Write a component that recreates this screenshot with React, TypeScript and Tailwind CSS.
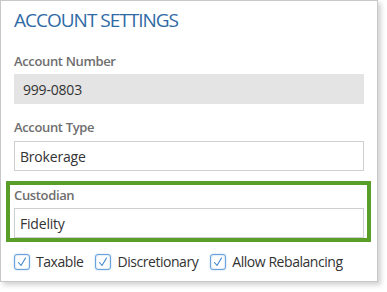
import React from "react";

const font = { fontFamily: '"Open Sans", "Noto Sans", sans-serif' };

function Check({ label }: { label: string }) {
  return (
    <div className="flex items-center">
      <div className="w-[16px] h-[16px] rounded-[3px] border border-[#6aa3dc] shadow-[inset_0_0_2px_rgba(106,163,220,0.6),0_0_2px_rgba(106,163,220,0.5)] bg-white flex items-center justify-center">
        <svg width="12" height="12" viewBox="0 0 12 12">
          <path d="M2.5 6.5 L5 9.5 L9.5 2" fill="none" stroke="#3f86d0" strokeWidth="1.1" strokeLinecap="round" strokeLinejoin="round" />
        </svg>
      </div>
      <span className="ml-[6px] text-[14px] leading-[18px] tracking-[-0.45px] text-[#333]">{label}</span>
    </div>
  );
}

export default function App() {
  return (
    <div className="bg-white w-[387px] h-[292px]" style={font}>
      <div className="w-[378px] h-[282px] border border-[#c8c8c8] bg-white shadow-[3px_3px_5px_rgba(0,0,0,0.18)]">
        <div className="pl-[13px] pr-[13px] pt-[7px]">
          <div className="text-[19px] leading-[24px] tracking-[-1px] text-[#2f6aa5]">ACCOUNT SETTINGS</div>
          <div className="mt-[20px] text-[13px] leading-[18px] font-semibold tracking-[-0.35px] text-[#6e6e6e]">Account Number</div>
          <div className="mt-[4px] h-[30px] bg-[#e4e4e4] pl-[9px] flex items-center text-[14px] tracking-[-0.2px] text-[#333]">999-0803</div>
          <div className="mt-[14px] text-[13px] leading-[18px] font-semibold tracking-[-0.35px] text-[#6e6e6e]">Account Type</div>
          <div className="mt-[5px] h-[30px] border border-[#cfcfcf] pl-[5px] flex items-center text-[14px] tracking-[-0.2px] text-[#333]">Brokerage</div>
          <div className="mt-[10px] -ml-[8px] -mr-[7px] border-[4px] border-[#5a9e2a] pl-[4px] pr-[3px] pt-[1px]">
            <div className="text-[13px] leading-[18px] font-semibold tracking-[-0.35px] text-[#6e6e6e]">Custodian</div>
            <div className="mt-[4px] h-[30px] border border-[#cfcfcf] pl-[5px] flex items-center text-[14px] tracking-[-0.2px] text-[#333]">Fidelity</div>
          </div>
          <div className="mt-[11px] flex items-center gap-[12px]">
            <Check label="Taxable" />
            <Check label="Discretionary" />
            <Check label="Allow Rebalancing" />
          </div>
        </div>
      </div>
    </div>
  );
}
